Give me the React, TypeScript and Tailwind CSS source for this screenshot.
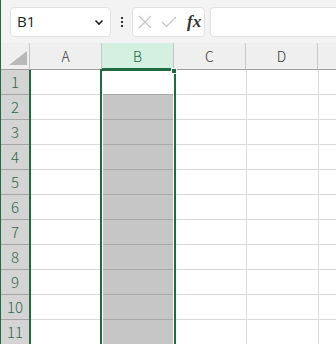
import React from "react";

const rows = [1, 2, 3, 4, 5, 6, 7, 8, 9, 10, 11];

export default function App() {
  return (
    <div
      className="relative w-[336px] h-[344px] overflow-hidden bg-white border-l border-[#1e6b41]"
      style={{ fontFamily: '"Noto Sans CJK JP", "Noto Sans", sans-serif' }}
    >
      {/* toolbar */}
      <div className="h-[43px] bg-[#f3f3f3] flex items-center pl-[9px] gap-0">
        <div className="w-[101px] h-[30px] bg-white border border-[#e1e1e1] rounded-[4px] flex items-center justify-between pl-[6px] pr-[6px]">
          <span className="text-[15px] text-[#222]" style={{ fontFamily: '"Open Sans", sans-serif' }}>B1</span>
          <svg width="10" height="8" viewBox="0 0 10 8">
            <path d="M1.5 2.5 L5 6 L8.5 2.5" fill="none" stroke="#222" strokeWidth="1.6" />
          </svg>
        </div>
        <div className="w-[21px] flex flex-col items-center gap-[2px]">
          <div className="w-[2px] h-[2px] bg-[#333]" />
          <div className="w-[2px] h-[2px] bg-[#333]" />
          <div className="w-[2px] h-[2px] bg-[#333]" />
        </div>
        <div className="w-[73px] h-[30px] bg-white border border-[#e1e1e1] rounded-[4px] flex items-center pl-[5px]">
          <svg width="14" height="14" viewBox="0 0 14 14">
            <path d="M1 1 L13 13 M13 1 L1 13" stroke="#c4c4c4" strokeWidth="1.2" />
          </svg>
          <svg width="16" height="12" viewBox="0 0 16 12" className="ml-[9px]">
            <path d="M1 6 L5.5 10.5 L15 1" fill="none" stroke="#c4c4c4" strokeWidth="1.2" />
          </svg>
          <span
            className="ml-[10px] text-[17px] italic text-[#333] leading-none"
            style={{ fontFamily: '"Liberation Serif", serif', fontWeight: 600 }}
          >
            fx
          </span>
        </div>
        <div className="ml-[5px] flex-1 h-[30px] bg-white border border-[#e1e1e1] rounded-l-[4px] border-r-0" />
      </div>

      {/* column header */}
      <div className="flex h-[27px] bg-[#efefef]">
        <div className="w-[28px] shrink-0 relative border-b border-[#9e9e9e]">
          <svg width="18" height="14" viewBox="0 0 18 14" className="absolute left-[8px] top-[8px]">
            <path d="M18 0 L18 14 L0 14 Z" fill="#b9b9b9" />
          </svg>
        </div>
        <div className="w-[1px] shrink-0 bg-[#c6c6c6] border-b border-[#9e9e9e]" />
        <div className="w-[72px] shrink-0 border-r border-[#c6c6c6] border-b border-b-[#9e9e9e] flex items-center justify-center text-[14px] font-light text-[#333]">A</div>
        <div className="w-[72px] shrink-0 bg-[#d3f0e0] border-r border-[#c6c6c6] border-b-2 border-b-[#1e6b41] flex items-center justify-center text-[14px] font-light text-[#1e6b41] pt-[1px]">B</div>
        <div className="w-[72px] shrink-0 border-r border-[#c6c6c6] border-b border-b-[#9e9e9e] flex items-center justify-center text-[14px] font-light text-[#333]">C</div>
        <div className="w-[72px] shrink-0 border-r border-[#c6c6c6] border-b border-b-[#9e9e9e] flex items-center justify-center text-[14px] font-light text-[#333]">D</div>
        <div className="flex-1 border-b border-[#9e9e9e]" />
      </div>

      {/* rows */}
      {rows.map((r) => (
        <div key={r} className="flex h-[25px]">
          <div className="w-[28px] shrink-0 bg-[#d4d4d4] border-b border-[#a6a6a6] flex items-center justify-center pt-[1px] text-[15px] font-light text-[#2c6a48]">
            {r}
          </div>
          <div className="w-[2px] shrink-0 bg-[#1e6b41]" />
          <div className="w-[72px] shrink-0 border-r border-b border-[#dadada]" />
          <div className={`w-[72px] shrink-0 border-r border-b ${r === 1 ? "bg-white border-[#a9a9a9]" : "bg-[#c6c6c6] border-[#a9a9a9]"}`} />
          <div className="w-[72px] shrink-0 border-r border-b border-[#dadada]" />
          <div className="w-[72px] shrink-0 border-r border-b border-[#dadada]" />
          <div className="flex-1 border-b border-[#dadada]" />
        </div>
      ))}

      {/* selection overlay */}
      <div className="absolute left-[99px] top-[69px] w-[76px] h-[290px] border-2 border-[#1e6b41] pointer-events-none">
        <div className="w-full h-full border border-white" />
      </div>
      <div className="absolute left-[170px] top-[68px] w-[6px] h-[6px] bg-[#1e6b41] border border-white" />
    </div>
  );
}
